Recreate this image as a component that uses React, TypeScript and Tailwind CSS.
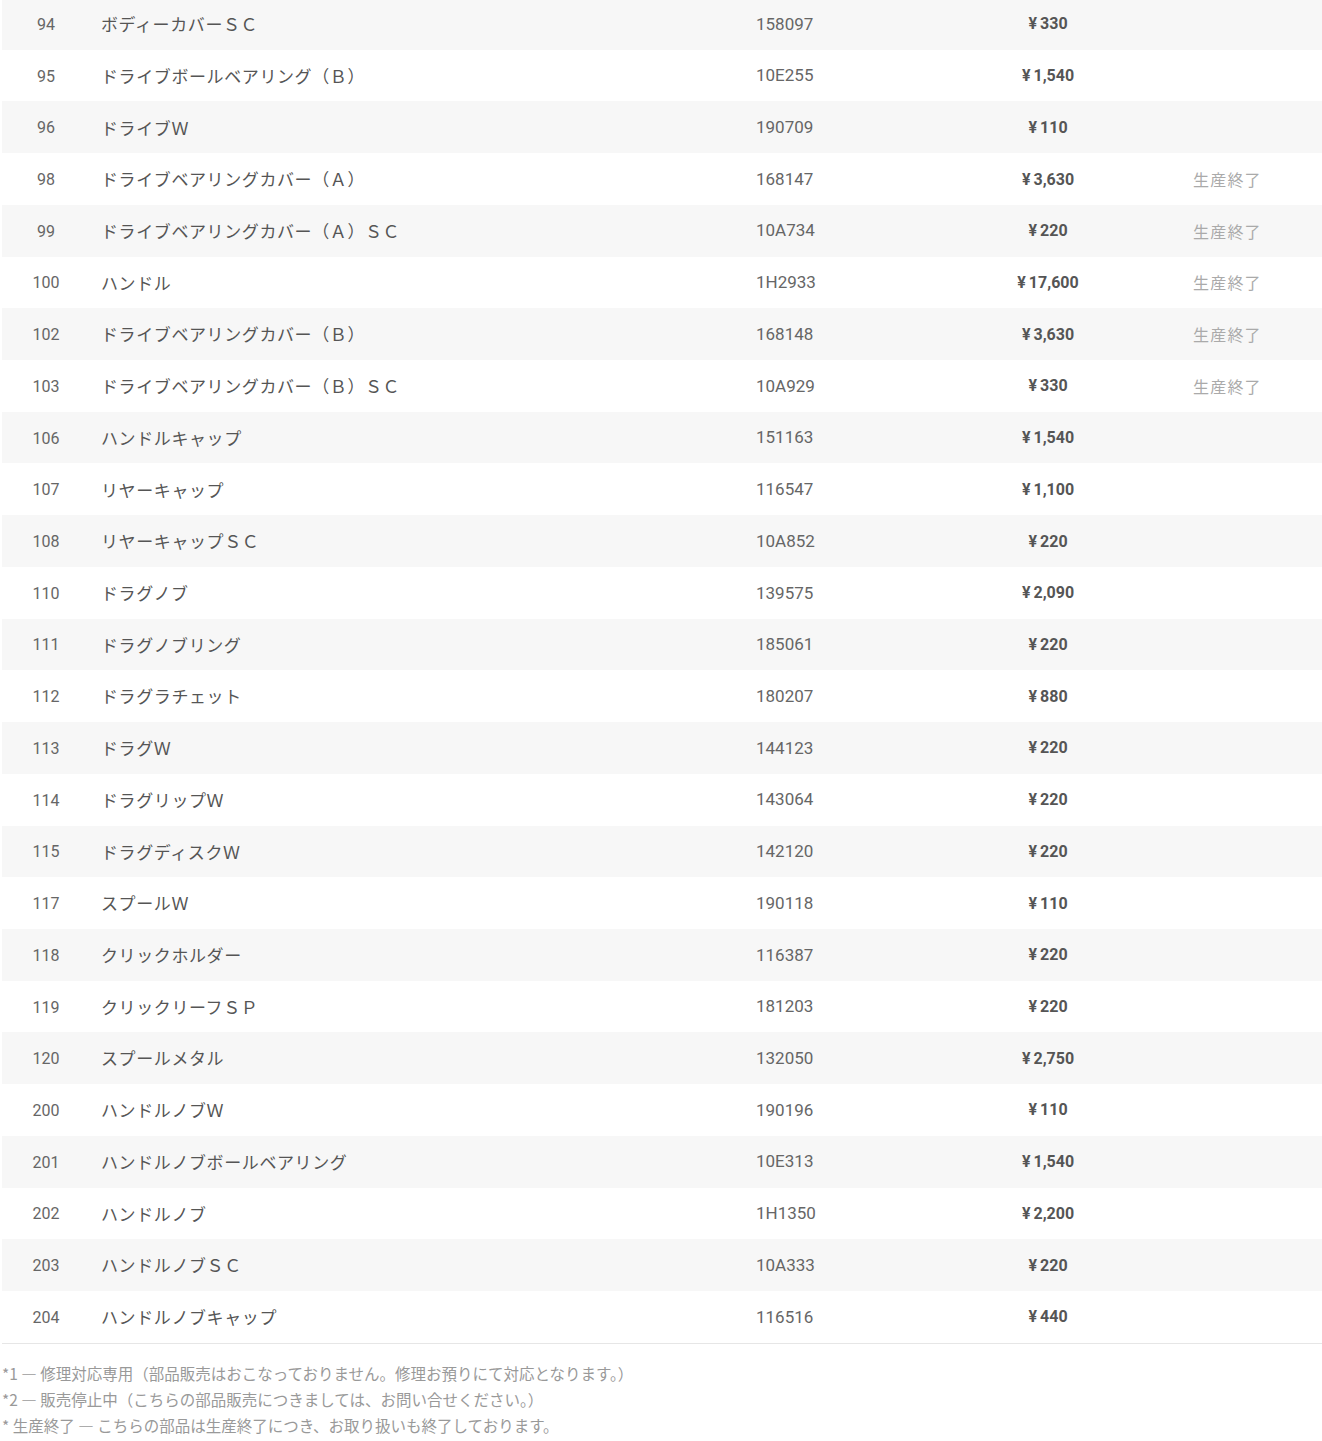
import React from "react";

const rows: [string, string, string, string, boolean][] = [
  ["94", "ボディーカバーＳＣ", "158097", "330", false],
  ["95", "ドライブボールベアリング（Ｂ）", "10E255", "1,540", false],
  ["96", "ドライブＷ", "190709", "110", false],
  ["98", "ドライブベアリングカバー（Ａ）", "168147", "3,630", true],
  ["99", "ドライブベアリングカバー（Ａ）ＳＣ", "10A734", "220", true],
  ["100", "ハンドル", "1H2933", "17,600", true],
  ["102", "ドライブベアリングカバー（Ｂ）", "168148", "3,630", true],
  ["103", "ドライブベアリングカバー（Ｂ）ＳＣ", "10A929", "330", true],
  ["106", "ハンドルキャップ", "151163", "1,540", false],
  ["107", "リヤーキャップ", "116547", "1,100", false],
  ["108", "リヤーキャップＳＣ", "10A852", "220", false],
  ["110", "ドラグノブ", "139575", "2,090", false],
  ["111", "ドラグノブリング", "185061", "220", false],
  ["112", "ドラグラチェット", "180207", "880", false],
  ["113", "ドラグＷ", "144123", "220", false],
  ["114", "ドラグリップＷ", "143064", "220", false],
  ["115", "ドラグディスクＷ", "142120", "220", false],
  ["117", "スプールＷ", "190118", "110", false],
  ["118", "クリックホルダー", "116387", "220", false],
  ["119", "クリックリーフＳＰ", "181203", "220", false],
  ["120", "スプールメタル", "132050", "2,750", false],
  ["200", "ハンドルノブＷ", "190196", "110", false],
  ["201", "ハンドルノブボールベアリング", "10E313", "1,540", false],
  ["202", "ハンドルノブ", "1H1350", "2,200", false],
  ["203", "ハンドルノブＳＣ", "10A333", "220", false],
  ["204", "ハンドルノブキャップ", "116516", "440", false],
];

export default function App() {
  return (
    <div className="w-[1322px] bg-white pl-[2px] overflow-hidden">
      <div className="-mt-[2px] border-b border-[#e6e6e6]">
        {rows.map((r, i) => (
          <div
            key={r[0]}
            className={`grid grid-cols-[88px_655px_200px_206px_1fr] h-[51.72px] items-center ${
              i % 2 === 0 ? "bg-[#f7f7f7]" : "bg-white"
            }`}
          >
            <div className="text-center text-[16px] text-[#666] font-['Roboto',sans-serif] pt-[2px]">
              {r[0]}
            </div>
            <div className="pl-[11px] text-[17px] tracking-[0.6px] text-[#555] font-['Noto_Sans_CJK_JP','Noto_Sans',sans-serif]">
              {r[1]}
            </div>
            <div className="pl-[11px] text-[17px] text-[#666] font-['Roboto',sans-serif] pt-[1px]">
              {r[2]}
            </div>
            <div className="text-center text-[16px] font-bold text-[#555] font-['Roboto',sans-serif] pt-[1px]">
              <span className="mr-[3px]">¥</span>
              {r[3]}
            </div>
            <div className="pl-[42px] text-[16px] tracking-[1.2px] text-[#aaa] font-['Noto_Sans_CJK_JP','Noto_Sans',sans-serif]">
              {r[4] ? "生産終了" : ""}
            </div>
          </div>
        ))}
      </div>
      <div className="pt-[16px] text-[15.5px] leading-[26px] text-[#999] font-['Noto_Sans_CJK_JP','Noto_Sans',sans-serif]">
        <p>*1 ― 修理対応専用（部品販売はおこなっておりません。修理お預りにて対応となります。）</p>
        <p>*2 ― 販売停止中（こちらの部品販売につきましては、お問い合せください。）</p>
        <p>* 生産終了 ― こちらの部品は生産終了につき、お取り扱いも終了しております。</p>
      </div>
    </div>
  );
}
